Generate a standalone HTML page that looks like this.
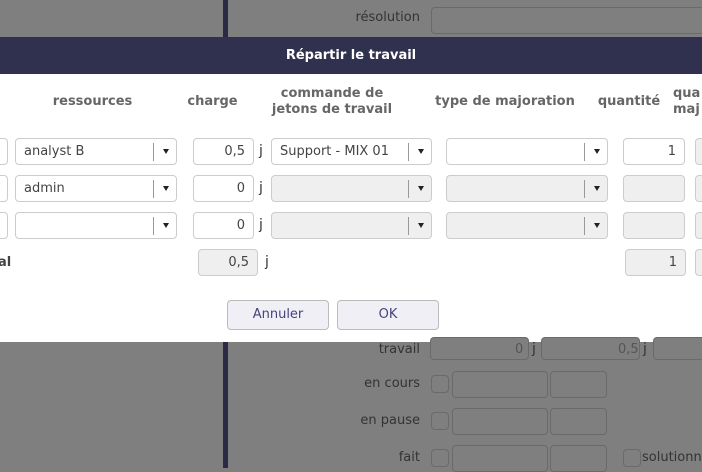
<html><head><style>
body{margin:0;width:702px;height:468px;overflow:hidden;position:relative;background:#7f7f7f;font-family:"DejaVu Sans","Liberation Sans",sans-serif;}
.a{position:absolute;box-sizing:border-box}
.f{position:absolute;box-sizing:border-box;border:1px solid #ccc;border-radius:4px;background:#fff;height:27px;font-size:13px;color:#444;line-height:26px;padding:0 8px}
.d{background:#efefef}
.n{text-align:right}
.s::after{content:"";position:absolute;right:22px;top:4px;height:18px;border-left:1px solid #999}
.s::before{content:"";position:absolute;right:7px;top:10px;border-left:3.5px solid transparent;border-right:3.5px solid transparent;border-top:5px solid #222}
.h{position:absolute;font-size:13px;font-weight:bold;color:#666;text-align:center;line-height:16px}
.j{position:absolute;font-size:14px;color:#333}
.o{position:absolute;box-sizing:border-box;border:1px solid #6a6a6a;border-radius:4px;background:#7f7f7f}
.ol{position:absolute;font-size:13px;color:#333;text-align:right}
.b{position:absolute;box-sizing:border-box;border:1px solid #bbb;border-radius:4px;background:#efeff5;color:#44447a;font-size:13px;text-align:center;line-height:28px;top:300px;height:30px;width:102px}
</style></head><body>
<div class="a" style="left:223px;top:0;width:5px;height:37px;background:#2a2a45"></div>
<div class="ol" style="right:282px;top:10px">résolution</div>
<div class="o" style="left:431px;top:7px;width:290px;height:27px"></div>
<div class="a" style="left:0;top:37px;width:702px;height:37px;background:#30304f;color:#fff;font-weight:bold;font-size:13px;text-align:center;line-height:37px">Répartir le travail</div>
<div class="a" style="left:0;top:74px;width:702px;height:268px;background:#fff"></div>
<div class="h" style="left:40px;top:94px;width:105px">ressources</div>
<div class="h" style="left:180px;top:94px;width:65px">charge</div>
<div class="h" style="left:262px;top:86px;width:140px">commande de<br>jetons de travail</div>
<div class="h" style="left:425px;top:94px;width:160px">type de majoration</div>
<div class="h" style="left:594px;top:94px;width:70px">quantité</div>
<div class="h" style="left:673px;top:86px;width:40px;text-align:left">qua<br>maj</div>
<!-- row1 -->
<div class="f" style="left:-10px;top:138px;width:15px"></div>
<div class="f s" style="left:15px;top:138px;width:162px">analyst B</div>
<div class="f n" style="left:193px;top:138px;width:61px">0,5</div><div class="j" style="left:259px;top:143px">j</div>
<div class="f s" style="left:271px;top:138px;width:161px">Support - MIX 01</div>
<div class="f s" style="left:446px;top:138px;width:162px"></div>
<div class="f n" style="left:623px;top:138px;width:62px">1</div>
<div class="f d" style="left:695px;top:138px;width:20px"></div>
<!-- row2 -->
<div class="f" style="left:-10px;top:175px;width:15px"></div>
<div class="f s" style="left:15px;top:175px;width:162px">admin</div>
<div class="f n" style="left:193px;top:175px;width:61px">0</div><div class="j" style="left:259px;top:180px">j</div>
<div class="f s d" style="left:271px;top:175px;width:161px"></div>
<div class="f s d" style="left:446px;top:175px;width:162px"></div>
<div class="f d" style="left:623px;top:175px;width:62px"></div>
<div class="f d" style="left:695px;top:175px;width:20px"></div>
<!-- row3 -->
<div class="f" style="left:-10px;top:212px;width:15px"></div>
<div class="f s" style="left:15px;top:212px;width:162px"></div>
<div class="f n" style="left:193px;top:212px;width:61px">0</div><div class="j" style="left:259px;top:217px">j</div>
<div class="f s d" style="left:271px;top:212px;width:161px"></div>
<div class="f s d" style="left:446px;top:212px;width:162px"></div>
<div class="f d" style="left:623px;top:212px;width:62px"></div>
<div class="f d" style="left:695px;top:212px;width:20px"></div>
<!-- total -->
<div class="h" style="left:-2px;top:255px;text-align:left;color:#444">al</div>
<div class="f n d" style="left:198px;top:249px;width:60px">0,5</div><div class="j" style="left:265px;top:254px">j</div>
<div class="f n d" style="left:625px;top:249px;width:61px">1</div>
<div class="f d" style="left:695px;top:249px;width:20px"></div>
<div class="b" style="left:227px">Annuler</div>
<div class="b" style="left:337px">OK</div>
<!-- overlay bottom -->
<div class="a" style="left:223px;top:342px;width:5px;height:126px;background:#2a2a45"></div>
<div class="ol" style="right:282px;top:342px">travail</div>
<div class="o" style="left:430px;top:337px;width:99px;height:23px"></div>
<div class="ol" style="left:515px;top:342px;color:#555">0</div><div class="j" style="left:532px;top:341px">j</div>
<div class="o" style="left:541px;top:337px;width:99px;height:23px"></div>
<div class="ol" style="left:618px;top:342px;color:#555">0,5</div><div class="j" style="left:643px;top:341px">j</div>
<div class="o" style="left:653px;top:337px;width:60px;height:23px"></div>
<div class="ol" style="right:282px;top:376px">en cours</div>
<div class="o" style="left:431px;top:375px;width:18px;height:18px"></div>
<div class="o" style="left:452px;top:371px;width:96px;height:27px"></div>
<div class="o" style="left:550px;top:371px;width:57px;height:27px"></div>
<div class="ol" style="right:282px;top:413px">en pause</div>
<div class="o" style="left:431px;top:412px;width:18px;height:18px"></div>
<div class="o" style="left:452px;top:408px;width:96px;height:27px"></div>
<div class="o" style="left:550px;top:408px;width:57px;height:27px"></div>
<div class="ol" style="right:282px;top:450px">fait</div>
<div class="o" style="left:431px;top:449px;width:18px;height:18px"></div>
<div class="o" style="left:452px;top:445px;width:96px;height:27px"></div>
<div class="o" style="left:550px;top:445px;width:57px;height:27px"></div>
<div class="o" style="left:623px;top:449px;width:18px;height:18px"></div>
<div class="ol" style="left:642px;top:450px;text-align:left">solutionn</div>
</body></html>
